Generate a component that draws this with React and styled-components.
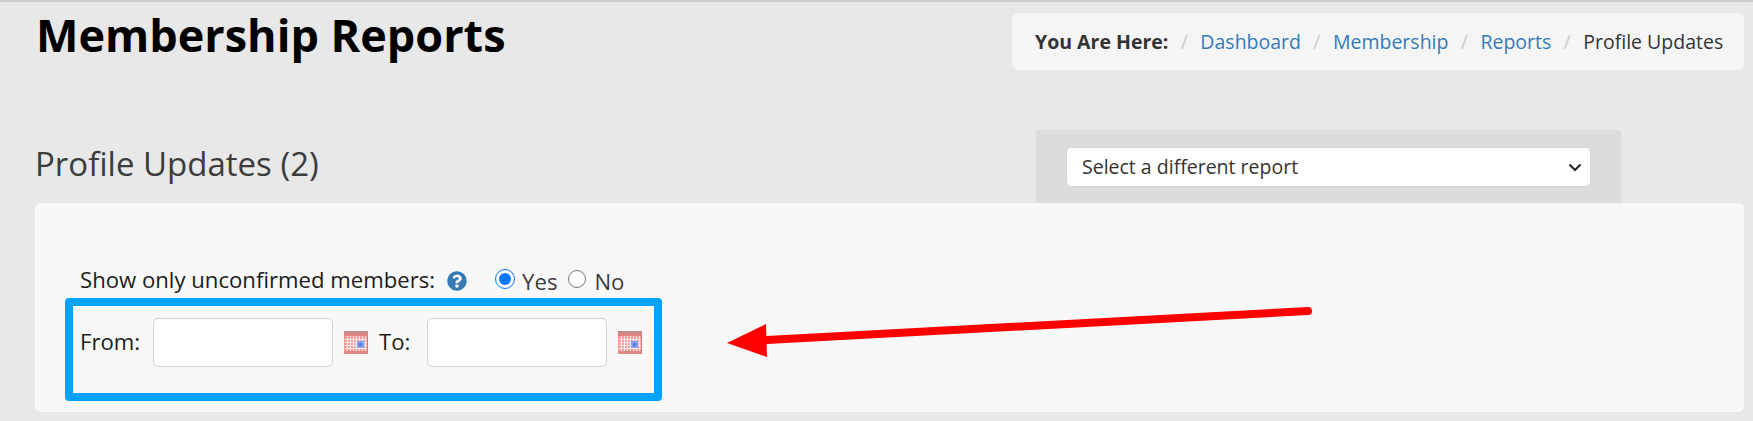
import styled, { createGlobalStyle } from "styled-components";
import { FaQuestionCircle } from "react-icons/fa";

const GlobalStyle = createGlobalStyle`
  html, body {
    margin: 0;
    padding: 0;
    background: #e8e8e8;
  }
  body {
    font-family: "Open Sans", "Noto Sans", sans-serif;
    color: #333;
  }
`;

const Page = styled.div`
  position: relative;
  box-sizing: border-box;
  height: 421px;
  overflow: hidden;
  border-top: 2px solid #ccc;
  padding: 11px 9px 0 35px;
`;

const Header = styled.div`
  display: flex;
  justify-content: space-between;
  align-items: flex-start;
`;

const Title = styled.h1`
  margin: 0 0 0 1px;
  font-size: 45px;
  line-height: 44px;
  font-weight: 700;
  color: #000;
`;

const Breadcrumb = styled.nav`
  box-sizing: border-box;
  display: flex;
  align-items: center;
  width: 732px;
  height: 57px;
  padding-left: 23px;
  background: #f5f5f5;
  border-radius: 6px;
  font-size: 19.5px;
`;

const Here = styled.strong`
  font-weight: 700;
`;

const Crumb = styled.a`
  color: #337ab7;
  text-decoration: none;
`;

const Sep = styled.span`
  color: #ccc;
  padding: 0 12.5px 0 12.3px;
`;

const ReportRow = styled.div`
  display: grid;
  grid-template-columns: 1001px 585px;
  margin-top: 60px;
  height: 73px;
`;

const SubTitle = styled.h2`
  margin: 0;
  padding-top: 14px;
  font-size: 33px;
  line-height: 40px;
  font-weight: 400;
  color: #3c3c3c;
`;

const ReportPanel = styled.div`
  padding: 17px 30px 0;
  background: #dcdcdc;
  border-radius: 4px 4px 0 0;
`;

const chevron = encodeURIComponent(
  '<svg xmlns="http://www.w3.org/2000/svg" width="14" height="9" viewBox="0 0 14 9"><path d="M1.5 1.5 7 7l5.5-5.5" fill="none" stroke="#222" stroke-width="2"/></svg>'
);

const ReportSelect = styled.select`
  box-sizing: border-box;
  width: 100%;
  height: 40px;
  padding: 0 11px 2px 15px;
  appearance: none;
  font-family: inherit;
  font-size: 19.5px;
  color: #333;
  background: #fff url("data:image/svg+xml,${chevron}") no-repeat right 8px center;
  border: 1px solid #d4d4d4;
  border-radius: 5px;
`;

const Card = styled.div`
  box-sizing: border-box;
  height: 209px;
  padding: 61px 30px 0;
  background: #f8f8f8;
  border-radius: 6px;
`;

const UnconfirmedRow = styled.div`
  display: flex;
  align-items: center;
  height: 30px;
  padding-left: 15px;
  font-size: 22.15px;
  color: #1c1c1c;
`;

const HelpIcon = styled(FaQuestionCircle)`
  flex: none;
  width: 20px;
  height: 20px;
  margin: 4px 0 0 12px;
  color: #337ab7;
`;

const Radio = styled.input`
  flex: none;
  width: ${(p) => p.$size}px;
  height: ${(p) => p.$size}px;
  margin: 0 ${(p) => p.$after}px 0 ${(p) => p.$gap}px;
`;

const RadioLabel = styled.label`
  color: #3c3c3c;
  line-height: 30px;
  padding-top: 3px;
`;

const DateBox = styled.div`
  box-sizing: border-box;
  display: flex;
  align-items: flex-start;
  width: 597px;
  height: 103px;
  margin-top: 4px;
  padding: 12px 8px 0 7px;
  border: 8px solid #00a2ff;
  border-radius: 4px;
  font-size: 22.15px;
  color: #1c1c1c;
`;

const DateLabel = styled.label`
  line-height: 47px;
  width: ${(p) => p.$width}px;
  flex: none;
`;

const DateInput = styled.input`
  box-sizing: border-box;
  flex: none;
  width: 180px;
  height: 49px;
  background: #fff;
  border: 1px solid #d0d0d0;
  border-radius: 5px;
`;

const CalendarSvg = styled.svg`
  flex: none;
  width: 24px;
  height: 23px;
  margin: 13px ${(p) => p.$after}px 0 11px;
`;

const ArrowLayer = styled.svg`
  position: absolute;
  left: 0;
  top: -2px;
  pointer-events: none;
`;

// small pink date-picker glyph, one per date field
function CalendarIcon({ after }) {
  const cols = [3, 6, 9, 12, 15, 18, 21];
  const rows = [8, 11, 14, 17];
  return (
    <CalendarSvg viewBox="0 0 24 23" $after={after}>
      <rect x="0" y="0" width="24" height="23" fill="#f29d9b" />
      <rect x="0" y="0" width="24" height="3" fill="#c98a88" />
      <rect x="0" y="3" width="24" height="2" fill="#e5807c" />
      {cols.map((x) => (
        <rect key={x} x={x} y="5" width="1" height="15" fill="#fff" opacity="0.75" />
      ))}
      {rows.map((y) => (
        <rect key={y} x="1" y={y} width="22" height="1" fill="#fff" opacity="0.75" />
      ))}
      <rect x="0" y="20" width="24" height="3" fill="#e08a86" />
      <rect x="23" y="3" width="1" height="20" fill="#d47c78" />
      <rect x="13" y="10" width="7" height="7" fill="#7fa4ee" />
      <rect x="15" y="12" width="3" height="3" fill="#4f7fe6" />
    </CalendarSvg>
  );
}

function App() {
  return (
    <>
      <GlobalStyle />
      <Page>
        <Header>
          <Title>Membership Reports</Title>
          <Breadcrumb>
            <Here>You Are Here:</Here>
            <Sep>/</Sep>
            <Crumb href="#">Dashboard</Crumb>
            <Sep>/</Sep>
            <Crumb href="#">Membership</Crumb>
            <Sep>/</Sep>
            <Crumb href="#">Reports</Crumb>
            <Sep>/</Sep>
            <span>Profile Updates</span>
          </Breadcrumb>
        </Header>

        <ReportRow>
          <SubTitle>Profile Updates (2)</SubTitle>
          <ReportPanel>
            <ReportSelect defaultValue="">
              <option value="">Select a different report</option>
            </ReportSelect>
          </ReportPanel>
        </ReportRow>

        <Card>
          <UnconfirmedRow>
            Show only unconfirmed members:
            <HelpIcon />
            <Radio type="radio" name="unconfirmed" id="yes" defaultChecked $size={20} $gap={28} $after={7} />
            <RadioLabel htmlFor="yes">Yes</RadioLabel>
            <Radio type="radio" name="unconfirmed" id="no" $size={18} $gap={11} $after={8} />
            <RadioLabel htmlFor="no">No</RadioLabel>
          </UnconfirmedRow>
          <DateBox>
            <DateLabel $width={73}>From:</DateLabel>
            <DateInput type="text" />
            <CalendarIcon after={11} />
            <DateLabel $width={48}>To:</DateLabel>
            <DateInput type="text" />
            <CalendarIcon after={0} />
          </DateBox>
        </Card>

        <ArrowLayer width="1753" height="421" viewBox="0 0 1753 421">
          <line x1="1308" y1="311" x2="767" y2="340" stroke="#ff0000" strokeWidth="8" strokeLinecap="round" />
          <polygon points="727,343 766,324 767,357" fill="#ff0000" />
        </ArrowLayer>
      </Page>
    </>
  );
}

export default App;
